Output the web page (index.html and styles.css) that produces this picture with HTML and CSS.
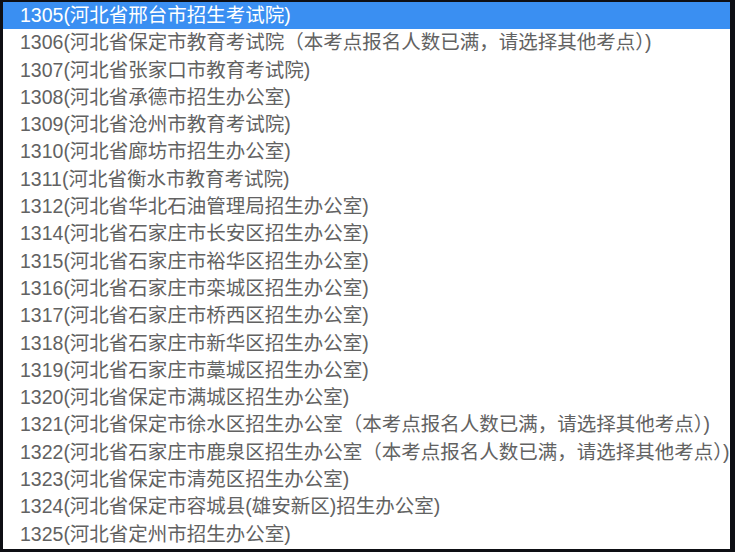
FILE: index.html
```html
<!DOCTYPE html>
<html lang="zh-CN">
<head>
<meta charset="utf-8">
<title>考点列表</title>
<link rel="stylesheet" href="styles.css">
</head>
<body>
<div class="frame">
  <ul class="listbox">
    <li class="option selected">1305(河北省邢台市招生考试院)</li>
    <li class="option">1306(河北省保定市教育考试院（本考点报名人数已满，请选择其他考点）)</li>
    <li class="option">1307(河北省张家口市教育考试院)</li>
    <li class="option">1308(河北省承德市招生办公室)</li>
    <li class="option">1309(河北省沧州市教育考试院)</li>
    <li class="option">1310(河北省廊坊市招生办公室)</li>
    <li class="option">1311(河北省衡水市教育考试院)</li>
    <li class="option">1312(河北省华北石油管理局招生办公室)</li>
    <li class="option">1314(河北省石家庄市长安区招生办公室)</li>
    <li class="option">1315(河北省石家庄市裕华区招生办公室)</li>
    <li class="option">1316(河北省石家庄市栾城区招生办公室)</li>
    <li class="option">1317(河北省石家庄市桥西区招生办公室)</li>
    <li class="option">1318(河北省石家庄市新华区招生办公室)</li>
    <li class="option">1319(河北省石家庄市藁城区招生办公室)</li>
    <li class="option">1320(河北省保定市满城区招生办公室)</li>
    <li class="option">1321(河北省保定市徐水区招生办公室（本考点报名人数已满，请选择其他考点）)</li>
    <li class="option">1322(河北省石家庄市鹿泉区招生办公室（本考点报名人数已满，请选择其他考点）)</li>
    <li class="option">1323(河北省保定市清苑区招生办公室)</li>
    <li class="option">1324(河北省保定市容城县(雄安新区)招生办公室)</li>
    <li class="option">1325(河北省定州市招生办公室)</li>
  </ul>
</div>
</body>
</html>
```
FILE: styles.css
```css
html, body {
  margin: 0;
  padding: 0;
  background: #0e0f14;
}

.frame {
  box-sizing: border-box;
  width: 735px;
  height: 552px;
  border-style: solid;
  border-color: #0e0f14;
  border-width: 2px 5px 3px 3px;
  background: #ffffff;
  overflow: hidden;
}

.listbox {
  list-style: none;
  margin: 0;
  padding: 0;
  font-family: "Liberation Sans", "Noto Sans CJK SC", sans-serif;
  font-size: 19.5px;
  color: #626262;
}

.option {
  height: 27.3px;
  line-height: 27.3px;
  padding-left: 17px;
  white-space: nowrap;
}

.option.selected {
  background: #3a8ff2;
  color: #ffffff;
}
```
